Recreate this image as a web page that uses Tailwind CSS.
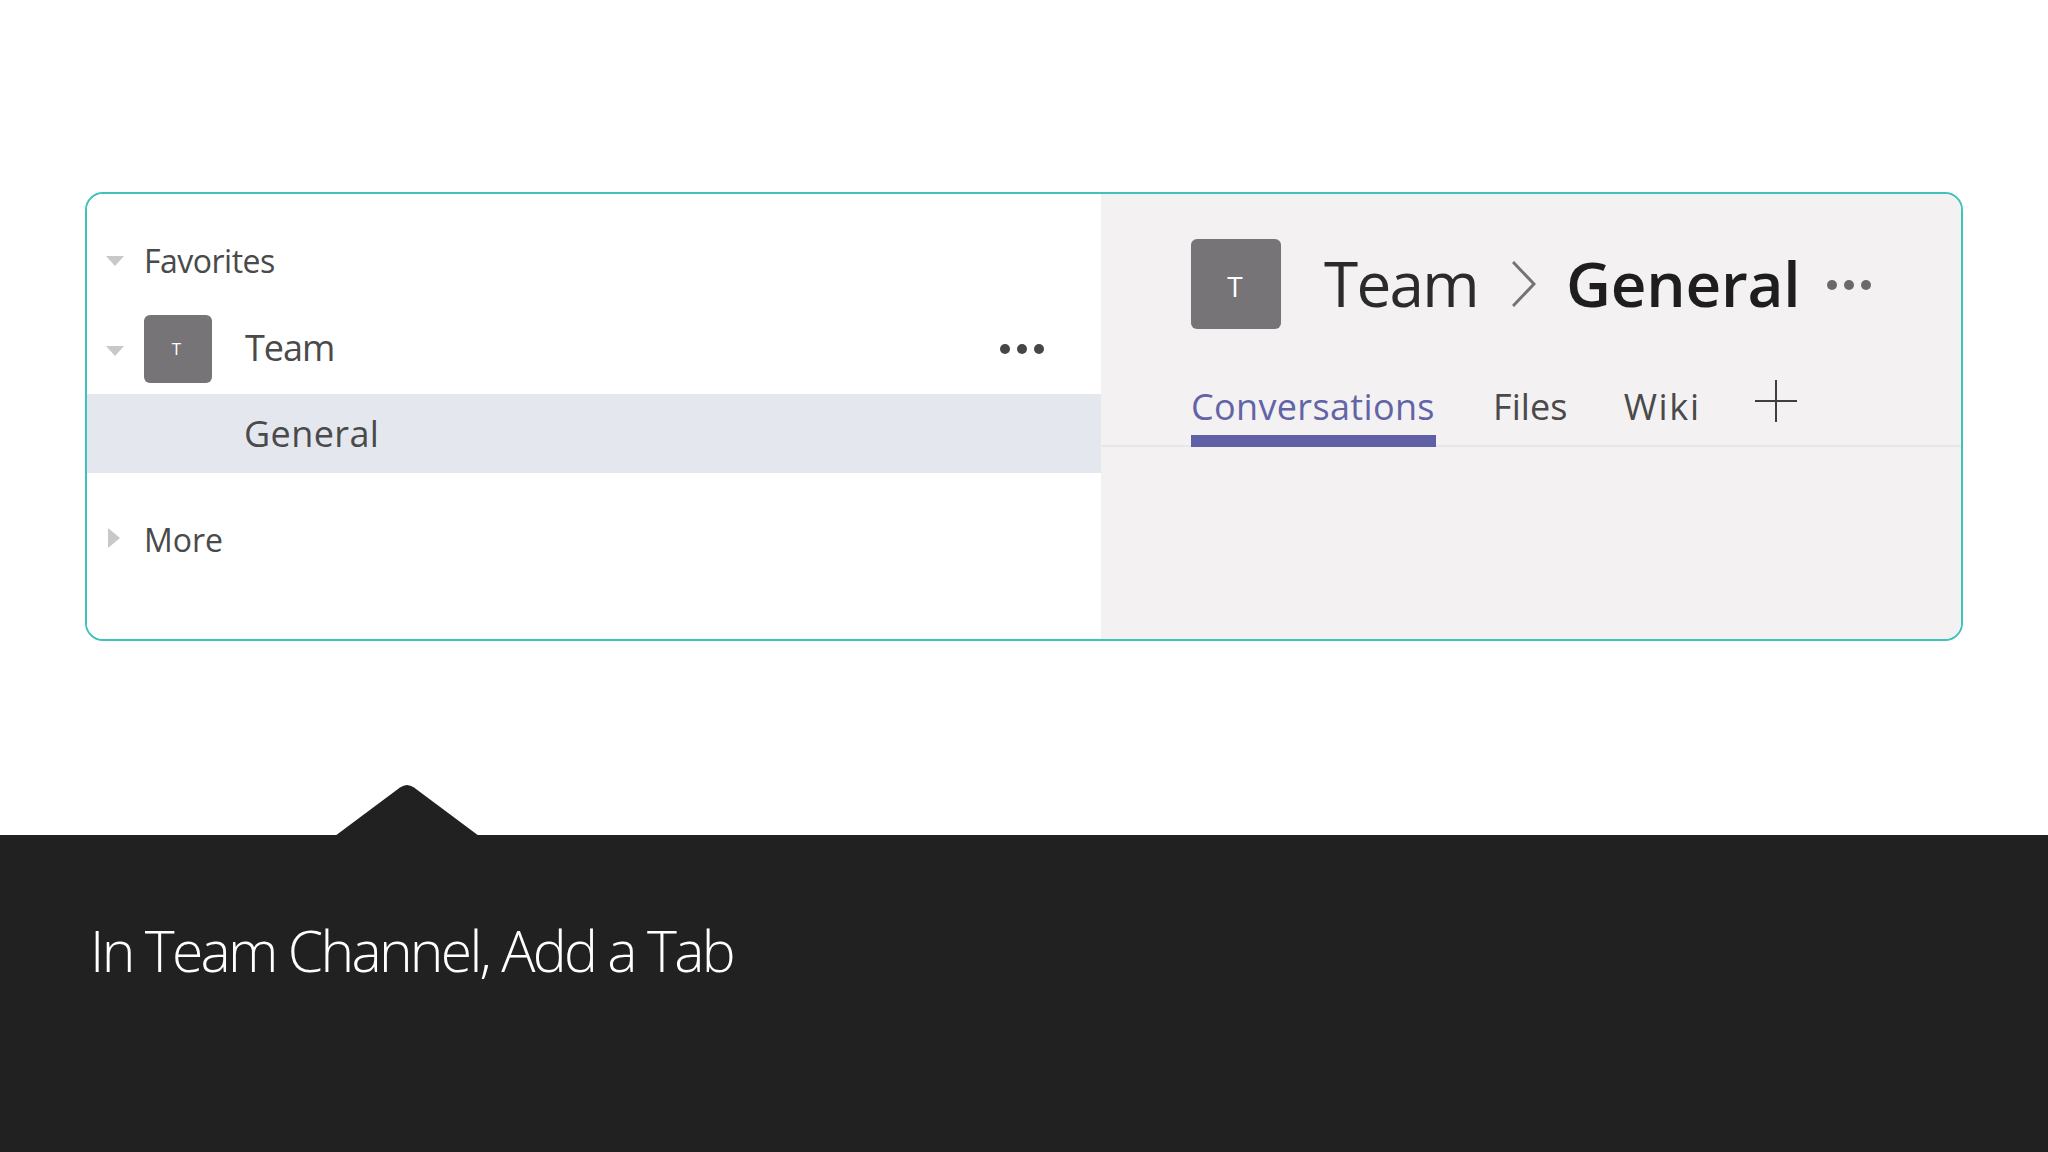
<!DOCTYPE html>
<html lang="en">
<head>
  <meta charset="UTF-8">
  <meta name="viewport" content="width=device-width, initial-scale=1.0">
  <title>In Team Channel, Add a Tab</title>
  <script src="https://cdn.jsdelivr.net/npm/@tailwindcss/browser@4"></script>
</head>
<body class="bg-white h-screen flex flex-col overflow-hidden font-['Open_Sans',sans-serif]">

  <!-- screenshot card -->
  <main class="h-[835px] pt-[192px] pl-[85px] pr-[85px]">
    <div class="h-[449px] flex border-2 border-[#3cc4bc] rounded-[18px] overflow-hidden">
      <!-- left list -->
      <div class="w-[1014px] bg-white pt-[40px] text-[#4a4a4a]">
        <div class="h-[54px] flex items-center pl-[19px]">
          <svg class="w-[18px] h-[10px] mr-[20px]" viewBox="0 0 18 10"><path d="M0 0h18l-9 10z" fill="#c8c8c8"/></svg>
          <span class="text-[32px] tracking-[-0.5px]">Favorites</span>
        </div>
        <div class="h-[80px] mt-[21px] flex items-center pl-[19px] pr-[57px]">
          <svg class="w-[18px] h-[10px] mr-[20px] mt-[4px]" viewBox="0 0 18 10"><path d="M0 0h18l-9 10z" fill="#c8c8c8"/></svg>
          <div class="w-[68px] h-[68px] rounded-[6px] bg-[#767476] text-white text-[17px] pr-[3px] flex items-center justify-center">T</div>
          <span class="ml-[33px] -mt-[2px] text-[36px] tracking-[-1px]">Team</span>
          <div class="ml-auto flex gap-[7px]">
            <i class="block w-[10px] h-[10px] rounded-full bg-[#464646]"></i>
            <i class="block w-[10px] h-[10px] rounded-full bg-[#464646]"></i>
            <i class="block w-[10px] h-[10px] rounded-full bg-[#464646]"></i>
          </div>
        </div>
        <div class="h-[79px] bg-[#e5e7ef] flex items-center pl-[157px] mt-[5px]">
          <span class="text-[36px] tracking-[0.4px]">General</span>
        </div>
        <div class="h-[54px] mt-[40px] flex items-center pl-[21px]">
          <svg class="w-[12px] h-[20px] mr-[24px] -mt-[4px]" viewBox="0 0 12 20"><path d="M0 0l12 10L0 20z" fill="#c8c8c8"/></svg>
          <span class="text-[32px]">More</span>
        </div>
      </div>
      <!-- channel header -->
      <div class="flex-1 bg-[#f4f1f2] pt-[45px]">
        <div class="flex items-center pl-[90px]">
          <div class="w-[90px] h-[90px] rounded-[6px] bg-[#767476] text-white text-[28px] pt-[3px] pr-[2px] flex items-center justify-center">T</div>
          <span class="ml-[43px] -mt-[2px] text-[62px] leading-none tracking-[-1.7px] text-[#2b2b2b]">Team</span>
          <svg class="w-[24px] h-[46px] ml-[34px]" viewBox="0 0 24 46" fill="none" stroke="#737373" stroke-width="3"><path d="M1 1l21 22L1 45"/></svg>
          <span class="ml-[30px] -mt-[2px] text-[62px] leading-none font-semibold tracking-[-0.2px] text-[#1e1e1e]">General</span>
          <div class="ml-[27px] flex gap-[7px] mt-[1px]">
            <i class="block w-[10px] h-[10px] rounded-full bg-[#6a6a6a]"></i>
            <i class="block w-[10px] h-[10px] rounded-full bg-[#6a6a6a]"></i>
            <i class="block w-[10px] h-[10px] rounded-full bg-[#6a6a6a]"></i>
          </div>
        </div>
        <div class="mt-[37px] h-[81px] flex items-end pl-[90px] border-b-2 border-[#e8e6e6] text-[36px] text-[#4a4a4a]">
          <div class="h-[67px] w-[245px] border-b-[12px] border-[#5f60a6] text-[#6264a7] tracking-[0.35px] whitespace-nowrap -mb-[2px]">Conversations</div>
          <div class="h-[65px] ml-[57px] tracking-[0.1px]">Files</div>
          <div class="h-[65px] ml-[56px] tracking-[1.7px]">Wiki</div>
          <svg class="w-[42px] h-[42px] ml-[54px] mb-[23px]" viewBox="0 0 42 42" stroke="#3f3f3f" stroke-width="2"><path d="M0 21h42M21 0v42"/></svg>
        </div>
      </div>
    </div>
  </main>

  <!-- caption band -->
  <footer class="relative flex-1 bg-[#212121] pl-[90px] pt-[77px]">
    <svg class="absolute left-[335px] -top-[50px] w-[144px] h-[51px]" viewBox="0 0 144 51"><path d="M0 51L65 2.5q7-5 14 0L144 51z" fill="#212121"/></svg>
    <p class="text-[57px] font-light text-white leading-[76px] tracking-[-2.7px]">In Team Channel, Add a Tab</p>
  </footer>

</body>
</html>
